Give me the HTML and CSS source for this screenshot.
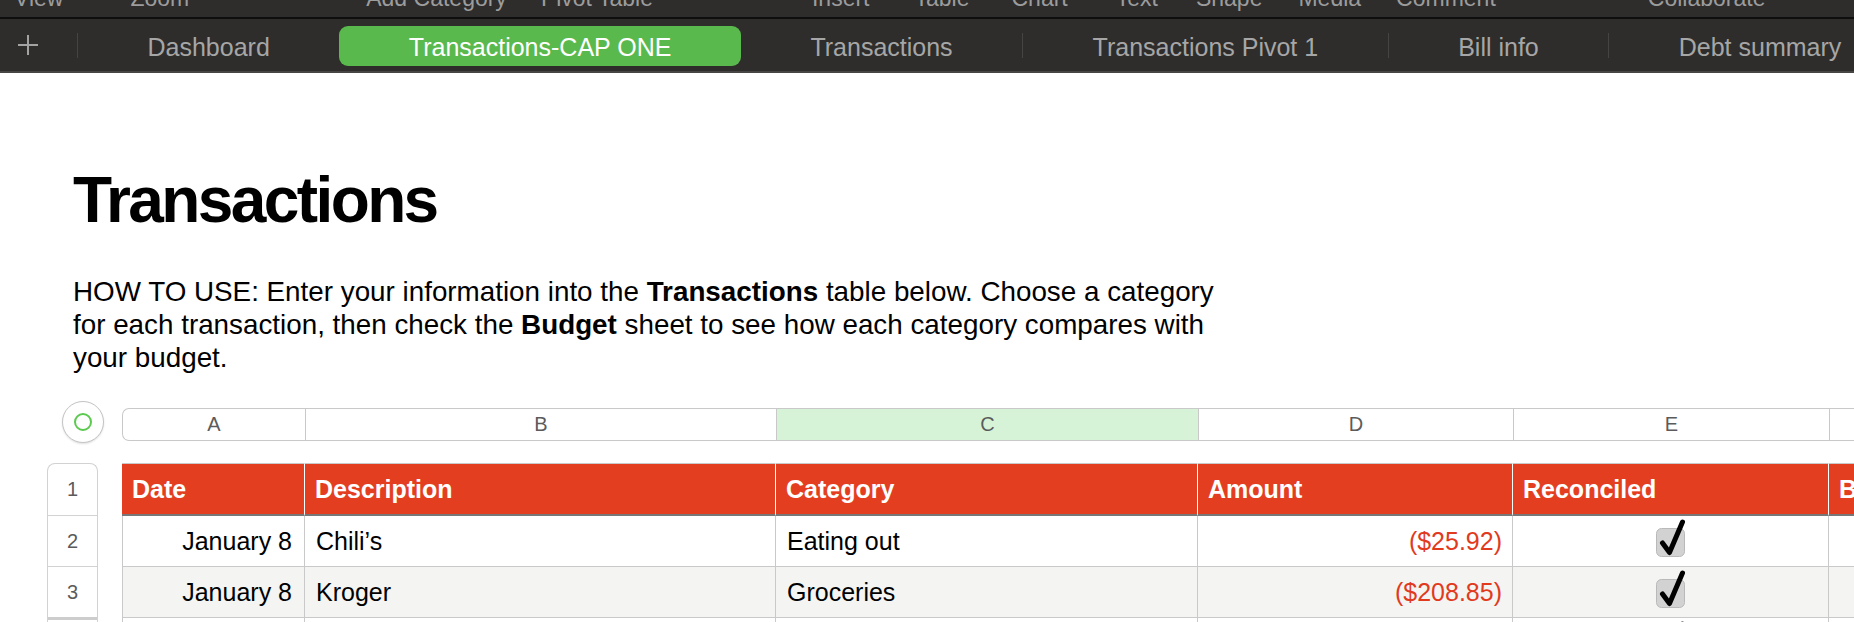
FILE: index.html
```html
<!DOCTYPE html>
<html lang="en">
<head>
<meta charset="utf-8">
<title>Transactions</title>
<link rel="stylesheet" href="styles.css">
</head>
<body>
<div class="menubar">
  <div class="menu">
    <span class="mi m-view">View</span>
    <span class="mi m-zoom">Zoom</span>
    <span class="mi m-addcat">Add Category</span>
    <span class="mi m-pivot">Pivot Table</span>
    <span class="mi m-insert">Insert</span>
    <span class="mi m-table">Table</span>
    <span class="mi m-chart">Chart</span>
    <span class="mi m-text">Text</span>
    <span class="mi m-shape">Shape</span>
    <span class="mi m-media">Media</span>
    <span class="mi m-comment">Comment</span>
    <span class="mi m-collab">Collaborate</span>
  </div>
</div>
<div class="tabbar">
  <div class="add">
    <svg width="20" height="20" viewBox="0 0 20 20"><path d="M10 0V20M0 10H20" stroke="#a3a3a3" stroke-width="2" fill="none"/></svg>
  </div>
  <div class="sep"></div>
  <div class="tab">Dashboard</div>
  <div class="tab active">Transactions-CAP ONE</div>
  <div class="tab">Transactions</div>
  <div class="sep"></div>
  <div class="tab">Transactions Pivot 1</div>
  <div class="sep"></div>
  <div class="tab">Bill info</div>
  <div class="sep"></div>
  <div class="tab">Debt summary</div>
</div>

<div class="intro">
  <h1 class="title">Transactions</h1>
  <p class="howto">HOW TO USE: Enter your information into the <b>Transactions</b> table below. Choose a category<br>for each transaction, then check the <b>Budget</b> sheet to see how each category compares with<br>your budget.</p>
</div>

<div class="sheet">
  <div class="sheet-head">
    <div class="corner"><span class="corner-ring"></span></div>
    <div class="colbar">
      <div class="col col-a">A</div>
      <div class="col col-b">B</div>
      <div class="col col-c selected">C</div>
      <div class="col col-d">D</div>
      <div class="col col-e">E</div>
      <div class="col col-f"></div>
    </div>
  </div>
  <div class="sheet-body">
    <div class="rowbar">
      <div class="rh rh-head">1</div>
      <div class="rh">2</div>
      <div class="rh">3</div>
      <div class="rh rh-next"></div>
    </div>
    <table class="grid">
      <colgroup>
        <col class="w-a"><col class="w-b"><col class="w-c"><col class="w-d"><col class="w-e"><col class="w-f">
      </colgroup>
      <thead>
        <tr>
          <th>Date</th>
          <th>Description</th>
          <th>Category</th>
          <th>Amount</th>
          <th>Reconciled</th>
          <th>Balance</th>
        </tr>
      </thead>
      <tbody>
        <tr>
          <td class="date">January 8</td>
          <td class="desc">Chili’s</td>
          <td class="cat">Eating out</td>
          <td class="amt">($25.92)</td>
          <td class="rec"><svg class="check" width="38" height="42" viewBox="0 0 38 42"><rect x="4.5" y="11.5" width="28" height="28" rx="5" fill="#d2d2d2" stroke="#b9b9b9"/><path d="M10.5 26L17.5 35.5L30.5 5" stroke="#000" stroke-width="5" fill="none" stroke-linecap="round" stroke-linejoin="round"/></svg></td>
          <td></td>
        </tr>
        <tr class="alt">
          <td class="date">January 8</td>
          <td class="desc">Kroger</td>
          <td class="cat">Groceries</td>
          <td class="amt">($208.85)</td>
          <td class="rec"><svg class="check" width="38" height="42" viewBox="0 0 38 42"><rect x="4.5" y="11.5" width="28" height="28" rx="5" fill="#d2d2d2" stroke="#b9b9b9"/><path d="M10.5 26L17.5 35.5L30.5 5" stroke="#000" stroke-width="5" fill="none" stroke-linecap="round" stroke-linejoin="round"/></svg></td>
          <td></td>
        </tr>
        <tr>
          <td class="date"></td>
          <td class="desc"></td>
          <td class="cat"></td>
          <td class="amt"></td>
          <td class="rec"><svg class="check" width="38" height="42" viewBox="0 0 38 42"><rect x="4.5" y="11.5" width="28" height="28" rx="5" fill="#d2d2d2" stroke="#b9b9b9"/><path d="M10.5 26L17.5 35.5L30.5 5" stroke="#000" stroke-width="5" fill="none" stroke-linecap="round" stroke-linejoin="round"/></svg></td>
          <td></td>
        </tr>
      </tbody>
    </table>
  </div>
</div>
</body>
</html>
```

FILE: styles.css
```css
* { box-sizing: border-box; }

html, body {
  margin: 0;
  padding: 0;
}

body {
  width: 1854px;
  height: 622px;
  overflow: hidden;
  background: #ffffff;
  font-family: "Liberation Sans", Arial, sans-serif;
  color: #000;
}

/* ---------- top toolbar labels (mostly cut off) ---------- */
.menubar {
  height: 19px;
  background: #2e2d2c;
  border-bottom: 2px solid #0e0e0e;
  overflow: hidden;
}

.menu {
  display: flex;
  padding-left: 14px;
  margin-top: -13px;
  font-size: 23px;
  line-height: 23px;
  color: #9c9c9c;
  white-space: nowrap;
}

.mi { flex: none; }
.m-zoom { margin-left: 67px; }
.m-addcat { margin-left: 177px; }
.m-pivot { margin-left: 34px; }
.m-insert { margin-left: 159px; }
.m-table { margin-left: 45px; }
.m-chart { margin-left: 42px; }
.m-text { margin-left: 48px; }
.m-shape { margin-left: 38px; }
.m-media { margin-left: 36px; }
.m-comment { margin-left: 35px; }
.m-collab { margin-left: 152px; }

/* ---------- sheet tabs ---------- */
.tabbar {
  height: 54px;
  padding-top: 7px;
  background: #2e2d2c;
  border-bottom: 2px solid #474645;
  display: flex;
  align-items: flex-start;
  white-space: nowrap;
  overflow: hidden;
}

.add {
  width: 77px;
  flex: none;
  padding-left: 18px;
  margin-top: 9px;
}

.add svg { display: block; }

.sep {
  width: 1px;
  height: 25px;
  margin-top: 7px;
  background: #454443;
  flex: none;
}

.tab {
  flex: none;
  padding: 0 69.5px;
  font-size: 25px;
  line-height: 42px;
  height: 40px;
  color: #a6a6a6;
}

.tab.active {
  background: #5ab94c;
  color: #ffffff;
  border-radius: 9px;
}

/* ---------- title and instructions ---------- */
.intro {
  padding-left: 73px;
}

.title {
  margin: 95px 0 0;
  font-size: 64px;
  line-height: 64px;
  font-weight: 700;
  letter-spacing: -2.6px;
}

.howto {
  margin: 43px 0 0;
  font-size: 27.8px;
  line-height: 33px;
}

.howto b { font-weight: 700; }

/* ---------- spreadsheet ---------- */
.sheet {
  margin-top: 27px;
}

.sheet-head {
  display: flex;
  align-items: flex-start;
  padding-left: 62px;
}

.corner {
  width: 42px;
  height: 42px;
  flex: none;
  margin-right: 18px;
  border: 1px solid #c4c4c4;
  border-radius: 50%;
  background: #fff;
  box-shadow: 0 1px 2px rgba(0, 0, 0, 0.12);
  display: flex;
  align-items: center;
  justify-content: center;
}

.corner-ring {
  width: 18px;
  height: 18px;
  border: 2px solid #5cc94f;
  border-radius: 50%;
}

.colbar {
  margin-top: 7px;
  display: flex;
  flex: none;
  height: 33px;
  border: 1px solid #c9c9c9;
  border-right: none;
  border-radius: 7px 0 0 7px;
  overflow: hidden;
}

.col {
  flex: none;
  height: 31px;
  line-height: 31px;
  text-align: center;
  font-size: 20px;
  color: #5b5b5b;
  border-left: 1px solid #c9c9c9;
}

.col-a { width: 182px; border-left: none; }
.col-b { width: 471px; }
.col-c { width: 422px; }
.col-d { width: 315px; }
.col-e { width: 316px; }
.col-f { width: 200px; }

.col.selected { background: #d6f3d8; }

.sheet-body {
  display: flex;
  align-items: flex-start;
  margin-top: 20px;
  padding-left: 47px;
}

.rowbar {
  width: 51px;
  flex: none;
  margin-right: 24px;
  border: 1px solid #d2d2d2;
  border-bottom: none;
  border-radius: 8px 8px 0 0;
}

.rh {
  height: 51px;
  border-bottom: 1px solid #d2d2d2;
  text-align: center;
  line-height: 50px;
  font-size: 20px;
  color: #5b5b5b;
}

.rh-head { height: 52px; line-height: 51px; }

.rh-next {
  border-bottom: none;
  border-top: 3px solid #cdcdcd;
  margin-top: -1px;
}

.grid {
  flex: none;
  width: 1907px;
  table-layout: fixed;
  border-collapse: separate;
  border-spacing: 0;
  font-size: 25px;
}

.w-a { width: 183px; }
.w-b { width: 471px; }
.w-c { width: 422px; }
.w-d { width: 315px; }
.w-e { width: 316px; }
.w-f { width: 200px; }

.grid th {
  height: 53px;
  padding: 0 10px;
  background: #e43e21;
  color: #ffffff;
  font-weight: 700;
  text-align: left;
  white-space: nowrap;
  overflow: hidden;
  border-top: 1px solid #c9c9c9;
  border-bottom: 2px solid #777777;
  border-right: 1px solid #ffffff;
}

.grid td {
  height: 51px;
  padding: 0 11px;
  border-bottom: 1px solid #c9c9c9;
  border-right: 1px solid #c9c9c9;
  white-space: nowrap;
  vertical-align: middle;
}

.grid td:first-child { border-left: 1px solid #c9c9c9; }

.grid tr.alt td { background: #f4f4f3; }

.grid td.date { text-align: right; padding-right: 12px; }
.grid td.amt { text-align: right; color: #e13a1d; padding-right: 10px; }
.grid td.rec { text-align: center; padding: 0; }

.check {
  display: block;
  margin: -6px auto 0;
}
```
